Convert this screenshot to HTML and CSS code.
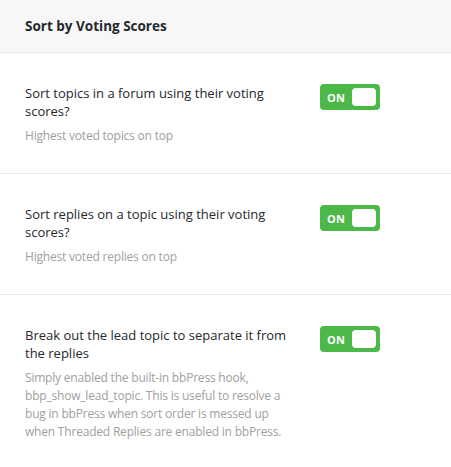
FILE: index.html
```html
<!DOCTYPE html>
<html>
<head>
<meta charset="utf-8">
<link rel="stylesheet" href="styles.css">
</head>
<body>
<div class="panel">
  <div class="panel-header">
    <h2 class="panel-title">Sort by Voting Scores</h2>
  </div>
  <div class="setting">
    <div class="setting-text">
      <div class="setting-title">Sort topics in a forum using their voting scores?</div>
      <div class="setting-desc">Highest voted topics on top</div>
    </div>
    <div class="toggle"><span class="toggle-label">ON</span><span class="toggle-knob"></span></div>
  </div>
  <div class="setting">
    <div class="setting-text">
      <div class="setting-title">Sort replies on a topic using their voting scores?</div>
      <div class="setting-desc">Highest voted replies on top</div>
    </div>
    <div class="toggle"><span class="toggle-label">ON</span><span class="toggle-knob"></span></div>
  </div>
  <div class="setting setting-last">
    <div class="setting-text">
      <div class="setting-title">Break out the lead topic to separate it from the replies</div>
      <div class="setting-desc">Simply enabled the built-in bbPress hook, bbp_show_lead_topic. This is useful to resolve a bug in bbPress when sort order is messed up when Threaded Replies are enabled in bbPress.</div>
    </div>
    <div class="toggle"><span class="toggle-label">ON</span><span class="toggle-knob"></span></div>
  </div>
</div>
</body>
</html>
```

FILE: styles.css
```css
html, body {
  margin: 0;
  padding: 0;
  background: #ffffff;
}
body {
  font-family: "Open Sans", "Noto Sans", sans-serif;
  color: #23282d;
  width: 451px;
}
.panel {
  display: flex;
  flex-direction: column;
}
.panel-header {
  background: #f7f7f7;
  border-bottom: 1px solid #e9e9e9;
  height: 52px;
  display: flex;
  align-items: center;
  padding: 0 25px;
}
.panel-title {
  margin: 0;
  font-size: 13.5px;
  font-weight: 700;
  color: #23282d;
}
.setting {
  display: flex;
  align-items: flex-start;
  padding: 31px 25px 28px 25px;
  border-bottom: 1px solid #ebebeb;
}
.setting-last {
  border-bottom: none;
}
.setting-text {
  width: 266px;
  line-height: 18px;
}
.setting-title {
  color: #23282d;
  font-size: 13px;
  margin-bottom: 7px;
}
.setting-desc {
  color: #a0a0a0;
  font-size: 12px;
  letter-spacing: -0.2px;
}
.toggle {
  margin-left: 29px;
  flex: none;
  width: 60px;
  height: 26px;
  box-sizing: border-box;
  background: #4cb848;
  border-radius: 4px;
  display: flex;
  align-items: center;
  justify-content: space-between;
  padding: 0 4px 0 7px;
}
.toggle-label {
  color: #ffffff;
  font-size: 11px;
  font-weight: 700;
  letter-spacing: 0.2px;
}
.toggle-knob {
  width: 24px;
  height: 18px;
  background: #ffffff;
  border-radius: 4px;
}
```
